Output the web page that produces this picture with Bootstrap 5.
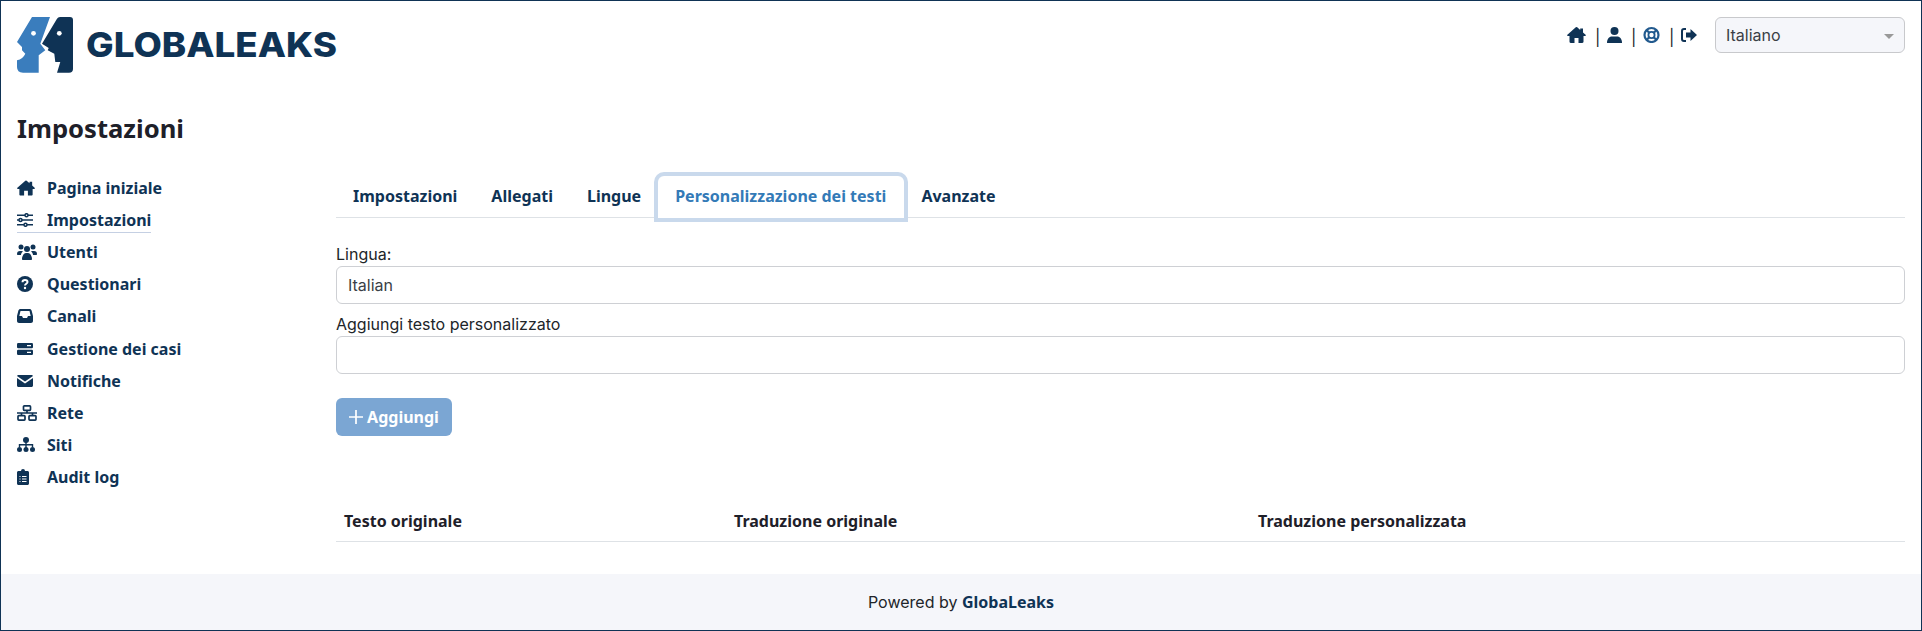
<!DOCTYPE html>
<html lang="it">
<head>
<meta charset="utf-8">
<title>GlobaLeaks</title>
<link href="https://cdn.jsdelivr.net/npm/bootstrap@5.3.0/dist/css/bootstrap.min.css" rel="stylesheet">
<style>
html,body{height:100%}
body{font-family:Inter,"Liberation Sans",sans-serif;font-size:16px;color:#212529;background:#fff}
.gl-frame{height:631px;border:1px solid #0f3355;display:flex;flex-direction:column;overflow:hidden}
.gl-main{flex:1 1 auto;padding:0 16px;min-height:0}
.gl-head{height:84px;padding-top:16px}
.gl-logo-text{font-family:Inter,sans-serif}
.gl-logo{display:block}
.gl-tools{color:#212529;font-size:16px;gap:9px}
.gl-tools svg{display:block}
.gl-pipe{display:block;width:3px;line-height:20px;text-align:center;margin-top:10px}
.gl-lang{width:190px;height:36px;background-color:#f5f6fa;border:1px solid #c8c9cc;border-radius:6px;font-size:16px;padding:0 10px;color:#3a3f46;margin-left:9px;position:relative;display:flex;align-items:center}
.gl-lang::after{content:"";position:absolute;right:10px;top:16px;border-left:5px solid transparent;border-right:5px solid transparent;border-top:5px solid #999}
.gl-title{font-family:"Noto Sans",sans-serif;font-weight:700;font-size:25.6px;line-height:30px;color:#1e2029;margin:29px 0 0}
.gl-body{display:flex}
.gl-side{width:319px;flex:none;padding-top:28px}
.gl-side-item{display:flex;align-items:center;height:32.1px;color:#0f3355;font-family:"Noto Sans",sans-serif;font-weight:700;font-size:16px;text-decoration:none}
.gl-side-item .gl-ico{width:30px;flex:none;display:flex}
.gl-side-on{position:relative}
.gl-side-on::after{content:"";position:absolute;left:0;top:28px;width:134px;height:1px;background:#c5d0e3}
.gl-content{flex:1 1 auto;min-width:0;padding-top:32px}
.gl-tabs{height:42px;border-bottom:1px solid #dee2e6;display:flex}
.gl-tab{font-family:"Noto Sans",sans-serif;font-weight:700;font-size:16px;color:#0f3355;padding:0 17px;height:42px;line-height:41px;text-decoration:none;white-space:nowrap}
.gl-tab-on{color:#337ab7;border-radius:6px 6px 0 0;background:#fff;box-shadow:0 0 0 4px #c9d9ec;position:relative;padding-right:18px}
.gl-lbl{margin:0;line-height:24px;font-size:16px;color:#212529;display:block}
.gl-field{height:38px;border:1px solid #ced0d4;border-radius:6px;padding:0 11px;font-size:16px;color:#3a3f46;width:100%}
.gl-btn{background:#7ba6d3;border:0;color:#fff;font-family:"Noto Sans",sans-serif;font-weight:700;font-size:16px;height:38px;width:116px;border-radius:6px;padding:0;display:flex;align-items:center;justify-content:center;gap:4px;margin-top:24px}
.gl-btn:disabled{background:#7ba6d3;color:#fff;opacity:1}
.gl-table{margin:65px 0 0;table-layout:fixed;width:100%}
.gl-table th{font-family:"Noto Sans",sans-serif;font-weight:700;font-size:16px;color:#1e2029;padding:8px;line-height:24px;border-bottom:1px solid #dee2e6}
.gl-c1{width:390px}
.gl-c2{width:524px}
.gl-lang-row{margin-top:24px}
.gl-foot{height:56px;background:#f5f6fa;display:flex;align-items:center;justify-content:center;font-size:16px;color:#212529;flex:none}
.gl-foot b{font-family:"Noto Sans",sans-serif;font-weight:700;color:#0f3355}
</style>
</head>
<body>
<div class="gl-frame">
  <div class="gl-main">
    <div class="gl-head d-flex justify-content-between align-items-start">
      <svg class="gl-logo" width="322" height="56" viewBox="0 0 322 56" aria-label="GlobaLeaks">
        <path fill="#3a7dbd" d="M15 0H33L23.300 26.700 28.300 33.300 21.700 38.300V55.700H6Q0 55.700 0 50V43.300Q6 42 8.300 36.700L5 33.300V30L0 25Z"/>
        <circle cx="16.500" cy="16.300" r="2.400" fill="#fff"/>
        <path fill="#0f3355" d="M40 1.700Q41 0 43 0H53Q56 0 56 3V52Q56 55.700 52 55.700H40L43.300 45H38.300L37.300 36.700 30.700 33.300 31.700 31 25 26.700Z"/>
        <circle cx="42.300" cy="16.300" r="2.400" fill="#fff"/>
        <text class="gl-logo-text" x="69" y="40" font-size="34" font-weight="800" textLength="251" lengthAdjust="spacingAndGlyphs" fill="#0f3355">GLOBALEAKS</text>
      </svg>
      <div class="gl-tools d-flex align-items-start">
        <svg width="19" height="26" viewBox="0 -10 19 26"><path fill="#0f3355" d="M8.800.3.400 7.700c-.6.500-.2 1.300.5 1.300H2.500v5.800c0 .6.500 1.200 1.200 1.200H7.500v-5h4v5h3.800c.7 0 1.200-.6 1.200-1.200V9h1.600c.7 0 1.100-.8.500-1.300L16 5.400V1.500h-2.800v1.500L10.200.3a1.100 1.100 0 0 0-1.400 0z"/></svg><span class="gl-pipe">|</span>
        <svg width="15" height="26" viewBox="0 -10 15 26"><circle cx="7.500" cy="4" r="4" fill="#0f3355"/><path fill="#0f3355" d="M0 16c0-4 2-6.500 5-6.500h5c3 0 5 2.500 5 6.500z"/></svg><span class="gl-pipe">|</span>
        <svg width="17" height="26" viewBox="0 -10 17 26"><circle cx="8.500" cy="8" r="7" fill="none" stroke="#225a8e" stroke-width="2.200"/><circle cx="8.500" cy="8" r="3.100" fill="none" stroke="#225a8e" stroke-width="1.800"/><path stroke="#225a8e" stroke-width="2.200" d="m3.500 3 3 3m4 4 3 3m0-10-3 3m-4 4-3 3"/></svg><span class="gl-pipe">|</span>
        <svg width="16" height="26" viewBox="0 -10 16 26"><path fill="none" stroke="#0f3355" stroke-width="2" d="M5 2H3a2 2 0 0 0-2 2v8a2 2 0 0 0 2 2h2"/><path fill="#0f3355" d="M9.500 2 16 8l-6.500 6v-3.500H5v-5h4.500z"/></svg>
        <div class="gl-lang">Italiano</div>
      </div>
    </div>
    <h1 class="gl-title">Impostazioni</h1>
    <div class="gl-body">
      <nav class="gl-side">
        <a class="gl-side-item" href="#"><span class="gl-ico"><svg width="18" height="16" viewBox="0 0 19 16"><path fill="#0f3355" d="M8.800.3.400 7.700c-.6.500-.2 1.300.5 1.300H2.500v5.800c0 .6.500 1.200 1.200 1.200H7.500v-5h4v5h3.800c.7 0 1.200-.6 1.200-1.200V9h1.600c.7 0 1.100-.8.500-1.300L16 5.400V1.500h-2.800v1.500L10.200.3a1.100 1.100 0 0 0-1.400 0z"/></svg></span><span>Pagina iniziale</span></a>
        <a class="gl-side-item gl-side-on" href="#"><span class="gl-ico"><svg width="16" height="14" viewBox="0 0 16 14"><g fill="none" stroke="#0f3355" stroke-width="1.500"><path d="M0 2.200h8m3 0h5M0 7h2m3 0h11M0 11.800h7m3 0h6"/><circle cx="9.500" cy="2.200" r="1.500"/><circle cx="3.500" cy="7" r="1.500"/><circle cx="8.500" cy="11.800" r="1.500"/></g></svg></span><span>Impostazioni</span></a>
        <a class="gl-side-item" href="#"><span class="gl-ico"><svg width="20" height="16" viewBox="0 0 20 16"><g fill="#0f3355"><circle cx="4" cy="3" r="2.500"/><circle cx="16" cy="3" r="2.500"/><circle cx="10" cy="5" r="3"/><path d="M0 10c0-2 1-3 3-3h2l1 .5C4.500 8.500 4 10 4 11H1c-.6 0-1-.4-1-1zM20 10c0-2-1-3-3-3h-2l-1 .5c1.500 1 2 2.500 2 3.500h3c.6 0 1-.4 1-1zM5 15c0-3 2-6 4-6h2c2 0 4 3 4 6 0 .6-.4 1-1 1H6c-.6 0-1-.4-1-1z"/></g></svg></span><span>Utenti</span></a>
        <a class="gl-side-item" href="#"><span class="gl-ico"><svg width="16" height="16" viewBox="0 0 16 16"><circle cx="8" cy="8" r="8" fill="#0f3355"/><path fill="none" stroke="#fff" stroke-width="2" d="M5.500 6.200C5.500 4.800 6.600 4 8 4s2.500.8 2.500 2.100C10.500 7.800 8 7.800 8 9.600"/><circle cx="8" cy="12" r="1.200" fill="#fff"/></svg></span><span>Questionari</span></a>
        <a class="gl-side-item" href="#"><span class="gl-ico"><svg width="16" height="14" viewBox="0 0 16 14"><path fill="#0f3355" fill-rule="evenodd" d="M3.500 0h9c1 0 1.800.6 2.100 1.500L16 7v5c0 1.100-.9 2-2 2H2c-1.100 0-2-.9-2-2V7l1.400-5.500C1.700.6 2.500 0 3.500 0zm0 2L2.300 7H5l1 2h4l1-2h2.700L12.500 2z"/></svg></span><span>Canali</span></a>
        <a class="gl-side-item" href="#"><span class="gl-ico"><svg width="16" height="12" viewBox="0 0 16 12"><g fill="#0f3355"><rect width="16" height="5.200" rx="1.200"/><rect y="6.800" width="16" height="5.200" rx="1.200"/></g><path stroke="#fff" stroke-width="1.200" d="M10 2.600h4M10 9.400h4"/></svg></span><span>Gestione dei casi</span></a>
        <a class="gl-side-item" href="#"><span class="gl-ico"><svg width="16" height="12" viewBox="0 0 16 12"><path fill="#0f3355" d="M1.500 0h13c.7 0 1.300.5 1.500 1.100L8 6.600 0 1.100C.2.500.8 0 1.500 0zM0 3l8 5.400L16 3v7.500c0 .8-.7 1.500-1.500 1.500h-13C.7 12 0 11.300 0 10.500z"/></svg></span><span>Notifiche</span></a>
        <a class="gl-side-item" href="#"><span class="gl-ico"><svg width="20" height="16" viewBox="0 0 20 16"><g fill="none" stroke="#0f3355" stroke-width="1.700"><rect x="6.500" y=".9" width="7" height="4.400" rx=".8"/><rect x="1" y="10.700" width="7" height="4.400" rx=".8"/><rect x="12" y="10.700" width="7" height="4.400" rx=".8"/><path d="M0 8h20M10 5v3M4.500 8v3M15.500 8v3"/></g></svg></span><span>Rete</span></a>
        <a class="gl-side-item" href="#"><span class="gl-ico"><svg width="18" height="15" viewBox="0 0 18 15"><g fill="#0f3355"><circle cx="9" cy="3" r="3"/><circle cx="2.500" cy="12.500" r="2.500"/><circle cx="9" cy="12.500" r="2.500"/><circle cx="15.500" cy="12.500" r="2.500"/></g><path fill="none" stroke="#0f3355" stroke-width="1.400" d="M9 5v6M2.500 10V7.700h13V10"/></svg></span><span>Siti</span></a>
        <a class="gl-side-item" href="#"><span class="gl-ico"><svg width="12" height="16" viewBox="0 0 12 16"><path fill="#0f3355" d="M4 2a2 2 0 0 1 4 0h2.500c.8 0 1.500.7 1.500 1.500v11c0 .8-.7 1.500-1.500 1.500h-9C.7 16 0 15.300 0 14.500v-11C0 2.700.7 2 1.500 2z"/><path stroke="#fff" stroke-width="1.100" d="M2.500 7.500h1m1.500 0h4.500M2.500 10h1m1.500 0h4.500M2.500 12.500h1m1.500 0h4.500"/></svg></span><span>Audit log</span></a>
      </nav>
      <div class="gl-content">
        <div class="gl-tabs">
          <a class="gl-tab" href="#">Impostazioni</a>
          <a class="gl-tab" href="#">Allegati</a>
          <a class="gl-tab" href="#">Lingue</a>
          <a class="gl-tab gl-tab-on" href="#">Personalizzazione dei testi</a>
          <a class="gl-tab" href="#">Avanzate</a>
        </div>
        <div class="gl-lang-row">
          <label class="gl-lbl">Lingua:</label>
          <div class="gl-field d-flex align-items-center">Italian</div>
        </div>
        <div class="mt-2">
          <label class="gl-lbl">Aggiungi testo personalizzato</label>
          <div class="gl-field"></div>
        </div>
        <button class="gl-btn" disabled><svg width="14" height="14" viewBox="0 0 14 14"><path stroke="#fff" stroke-width="1.700" d="M7 0v14M0 7h14"/></svg>Aggiungi</button>
        <table class="table gl-table">
          <thead><tr><th class="gl-c1">Testo originale</th><th class="gl-c2">Traduzione originale</th><th>Traduzione personalizzata</th></tr></thead>
        </table>
      </div>
    </div>
  </div>
  <footer class="gl-foot"><span>Powered by&nbsp;<b>GlobaLeaks</b></span></footer>
</div>
<script src="https://cdn.jsdelivr.net/npm/bootstrap@5.3.0/dist/js/bootstrap.bundle.min.js"></script>
</body>
</html>
